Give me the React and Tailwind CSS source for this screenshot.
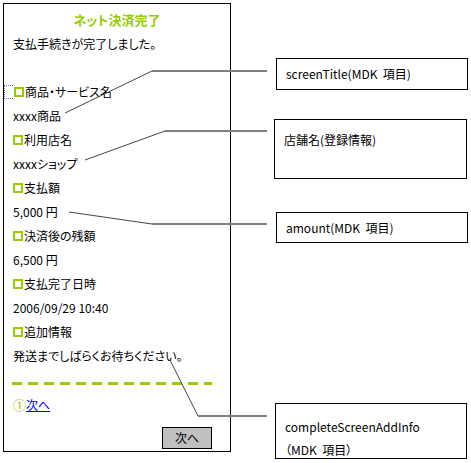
import React from 'react';

const fields = [
  { label: '商品・サービス名', value: 'xxxx商品', marker: true },
  { label: '利用店名', value: 'xxxxショップ' },
  { label: '支払額', value: '5,000 円' },
  { label: '決済後の残額', value: '6,500 円' },
  { label: '支払完了日時', value: '2006/09/29 10:40' },
  { label: '追加情報', value: '発送までしばらくお待ちください。' },
];

function Square() {
  return <span className="inline-block w-[10px] h-[10px] border-2 border-[#99cc00] mr-[1px] shrink-0" />;
}

function Callout({ className, children }) {
  return (
    <div className={`absolute border border-black bg-white px-[9px] text-[12px] ${className}`}>
      {children}
    </div>
  );
}

export default function App() {
  return (
    <div className="relative w-[471px] h-[463px] bg-white text-black text-[12px] font-['Noto_Sans_CJK_JP',sans-serif] [font-feature-settings:'palt'] pt-[3px] pl-[3px]">
      {/* phone screen */}
      <div className="w-[228px] h-[449px] border border-black pt-[4px] px-[9px]">
        <div className="h-6 leading-6 text-center font-bold text-[13px] text-[#99cc00]">ネット決済完了</div>
        <div className="h-6 leading-6">支払手続きが完了しました。</div>
        <div className="h-6" />
        {fields.map((f) => (
          <React.Fragment key={f.label}>
            <div className="h-6 flex items-center">
              {f.marker && (
                <span className="-ml-[9px] w-[9px] h-[14px] border border-dotted border-gray-500 border-r-0 mr-[1px]" />
              )}
              <Square />
              <span>{f.label}</span>
            </div>
            <div className="h-6 leading-6">{f.value}</div>
          </React.Fragment>
        ))}
        <svg width="200" height="3" className="block mt-[14px] -ml-[1px]">
          <line x1="0" y1="1.5" x2="200" y2="1.5" stroke="#99cc00" strokeWidth="3" strokeDasharray="10 6" />
        </svg>
        <div className="h-6 leading-6 mt-[8px]">
          <span className="text-[#99cc00] text-[13px]">①</span>
          <a href="#" className="text-[#0000ff] underline">次へ</a>
        </div>
        <div className="flex justify-end pr-[9px] mt-[10px]">
          <button className="w-[50px] h-[22px] bg-[#c0c0c0] border border-black text-[12px] leading-none">次へ</button>
        </div>
      </div>

      {/* callouts */}
      <Callout className="left-[276px] top-[58px] w-[192px] h-[32px] flex items-center">screenTitle(MDK&nbsp;&nbsp;項目)</Callout>
      <Callout className="left-[274px] top-[119px] w-[193px] h-[60px] pt-[12px] leading-4">店舗名(登録情報)</Callout>
      <Callout className="left-[276px] top-[212px] w-[192px] h-[31px] flex items-center">amount(MDK&nbsp;&nbsp;項目)</Callout>
      <Callout className="left-[275px] top-[403px] w-[192px] h-[56px] pt-[11px] leading-[23px]">
        <div>completeScreenAddInfo</div>
        <div>（MDK&nbsp;&nbsp;項目）</div>
      </Callout>

      {/* connector lines */}
      <svg className="absolute inset-0 pointer-events-none" width="471" height="463">
        <g fill="none" strokeLinejoin="miter">
          <polyline points="65,113 152,71" stroke="#444" strokeWidth="1" />
          <line x1="152" y1="71" x2="267" y2="71" stroke="#808080" strokeWidth="2" />
          <polyline points="85,160 165,131" stroke="#444" strokeWidth="1" />
          <line x1="165" y1="131" x2="267" y2="131" stroke="#808080" strokeWidth="2" />
          <polyline points="69,212 152,224" stroke="#444" strokeWidth="1" />
          <line x1="152" y1="224" x2="267" y2="224" stroke="#808080" strokeWidth="2" />
          <polyline points="170,360 198,416" stroke="#444" strokeWidth="1" />
          <line x1="198" y1="416" x2="267" y2="416" stroke="#808080" strokeWidth="2" />
        </g>
      </svg>
    </div>
  );
}
